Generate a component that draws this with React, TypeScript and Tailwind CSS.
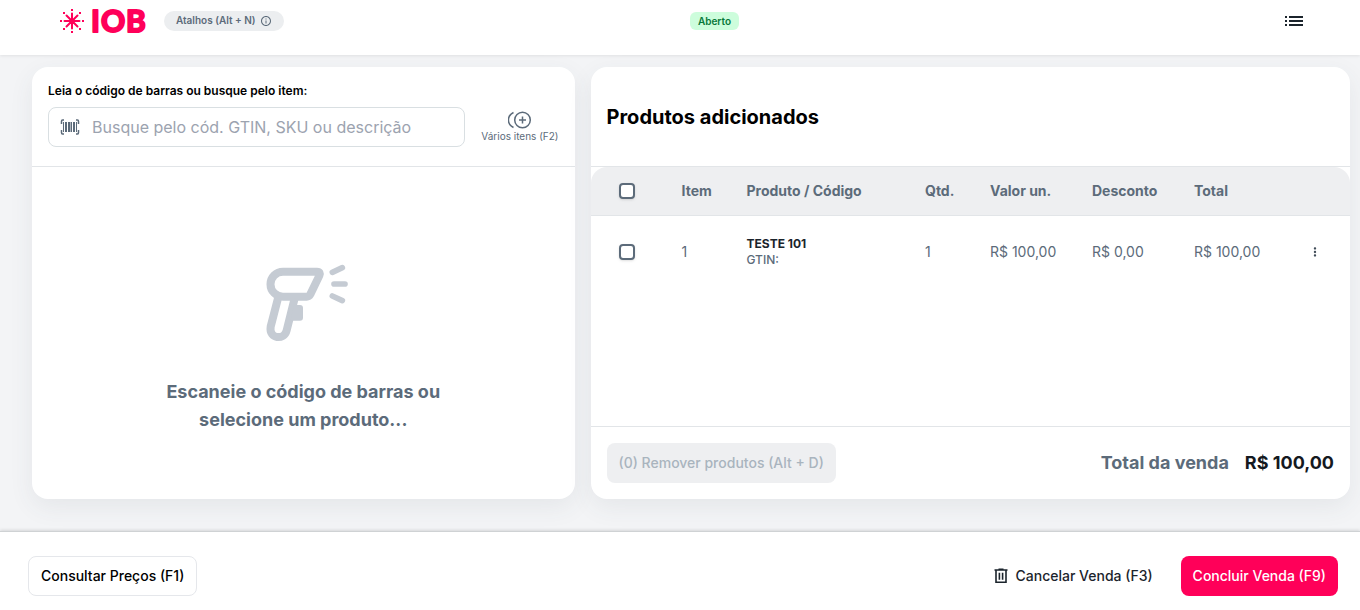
import { type ReactNode } from "react";
import { MdInfoOutline, MdList, MdMoreVert } from "react-icons/md";

interface SaleItem {
  id: number;
  name: string;
  gtin: string;
  quantity: number;
  unitPrice: string;
  discount: string;
  total: string;
}

const items: SaleItem[] = [
  {
    id: 1,
    name: "TESTE 101",
    gtin: "",
    quantity: 1,
    unitPrice: "R$ 100,00",
    discount: "R$ 0,00",
    total: "R$ 100,00",
  },
];

const Logo = () => (
  <svg width="92" height="40" viewBox="0 -7 92 40" role="img" aria-label="IOB">
    <g stroke="#ff0059" strokeWidth="2" strokeLinecap="round">
      <path d="M12 5.5V20.5M4.5 13H19.5M6.5 7.5L17.5 18.5M17.5 7.5L6.5 18.5" />
    </g>
    <g fill="#ff0059">
      <circle cx="12" cy="13" r="2.6" />
      <rect x="11" y="1" width="2" height="2" />
      <rect x="11" y="23" width="2" height="2" />
      <rect x="0" y="12" width="2" height="2" />
      <rect x="22" y="12" width="2" height="2" />
      <rect x="3" y="4" width="2" height="2" />
      <rect x="19" y="4" width="2" height="2" />
      <rect x="3" y="20" width="2" height="2" />
      <rect x="19" y="20" width="2" height="2" />
    </g>
    <text
      x="31 41 66"
      y="24"
      fill="#ff0059"
      stroke="#ff0059"
      strokeWidth="2"
      strokeLinejoin="round"
      className="font-['Lato',sans-serif] text-[30px] font-bold"
    >
      IOB
    </text>
  </svg>
);

const BarcodeIcon = () => (
  <svg width="20" height="16" viewBox="0 0 20 16" fill="none" aria-hidden="true">
    <path
      d="M4 1H2.5Q1.5 1 1.5 2.5V5M1.5 11V13.5Q1.5 15 2.5 15H4M16 1H17.5Q18.5 1 18.5 2.5V5M18.5 11V13.5Q18.5 15 17.5 15H16"
      stroke="#5c6b7a"
      strokeWidth="1.5"
    />
    <path
      d="M3.5 3V13M16.5 3V13M11.5 3V13"
      stroke="#5c6b7a"
      strokeWidth="1"
    />
    <path d="M5 3H7V13H5ZM8 3H10.5V13H8ZM13 3H15V13H13Z" fill="#5c6b7a" />
  </svg>
);

const AddManyIcon = () => (
  <svg
    width="24"
    height="18"
    viewBox="1 0 24 18"
    fill="none"
    stroke="#5c6b7a"
    strokeWidth="1.5"
    aria-hidden="true"
  >
    <circle cx="15.5" cy="9" r="7.8" />
    <path d="M15.5 5.5V12.5M12 9H19M6.5 1.5C-0.3 5 -0.3 13 6.5 16.5" />
  </svg>
);

const ScannerIcon = () => (
  <svg
    className="size-32"
    viewBox="-2 -51 384 384"
    fill="none"
    stroke="#c5cbd3"
    strokeWidth="24"
    aria-hidden="true"
  >
    <path d="M130 65H232Q244 65 239 77L212 133Q208 140 201 140H130A37.5 37.5 0 0 1 130 65Z" />
    <path d="M115 145L93 230C87 268 134 271 141 241L165 145" />
    <path
      d="M164 165H181Q190 165 190 174V203Q190 212 181 212H152Z"
      fill="#c5cbd3"
      stroke="none"
    />
    <path
      d="M278 67L308 53M283 102H316M278 138L308 152"
      strokeWidth="17"
      strokeLinecap="round"
    />
  </svg>
);

const TrashIcon = () => (
  <svg
    width="14"
    height="16"
    viewBox="0 0 14 16"
    fill="none"
    stroke="#1b242c"
    strokeWidth="1.6"
    aria-hidden="true"
  >
    <path d="M0.5 2H13.5M4.5 1.3H9.5M2 2V14.2H12V2M5.4 4.8V11.8M8.6 4.8V11.8" />
  </svg>
);

const Checkbox = ({ label }: { label: string }) => (
  <input
    type="checkbox"
    aria-label={label}
    className="block size-4 appearance-none rounded border-2 border-[#5c6b7a] bg-white shadow-sm checked:bg-[#5c6b7a]"
  />
);

const Card = ({ children }: { children: ReactNode }) => (
  <section className="flex flex-col rounded-2xl bg-white shadow-[0_8px_24px_rgba(60,75,85,0.08)]">
    {children}
  </section>
);

const Header = () => (
  <header className="relative grid min-h-[55px] grid-cols-[10fr_auto_9fr] items-center bg-white pr-[54px] pb-3.5 pl-[60px] shadow-[0_1px_3px_rgba(0,0,0,0.08)]">
    <div className="flex items-center gap-3">
      <Logo />
      <button
        type="button"
        className="flex h-5 items-center gap-1 rounded-full bg-[#eceef0] px-3 text-[10px] font-semibold text-[#5c6b7a]"
      >
        Atalhos (Alt + N)
        <MdInfoOutline size={12} />
      </button>
    </div>
    <span className="rounded-md bg-[#cdfddc] px-2 py-0.5 text-[10px] leading-[14px] font-semibold text-[#08783a]">
      Aberto
    </span>
    <button type="button" aria-label="Menu" className="justify-self-end">
      <MdList size={24} />
    </button>
  </header>
);

const SearchPanel = () => (
  <Card>
    <div className="flex min-h-[100px] items-start gap-4 border-b border-[#e2e5e8] p-4">
      <div className="flex-1">
        <label
          htmlFor="search"
          className="mb-2 block text-xs font-semibold text-black"
        >
          Leia o código de barras ou busque pelo item:
        </label>
        <div className="flex h-10 items-center gap-3 rounded-lg border border-[#d9dfe2] px-[11px]">
          <BarcodeIcon />
          <input
            id="search"
            type="text"
            placeholder="Busque pelo cód. GTIN, SKU ou descrição"
            className="min-w-0 flex-1 text-base outline-none placeholder:text-[#9ca3af]"
          />
        </div>
      </div>
      <button
        type="button"
        className="mt-7 flex flex-col items-center text-[10px] leading-[14px] text-[#5c6b7a]"
      >
        <AddManyIcon />
        Vários itens (F2)
      </button>
    </div>
    <div className="flex flex-1 flex-col items-center justify-center gap-[17px]">
      <ScannerIcon />
      <p className="max-w-[300px] text-center text-lg font-bold text-[#5c6b7a]">
        Escaneie o código de barras ou selecione um produto...
      </p>
    </div>
  </Card>
);

const ProductsTable = () => (
  <table className="w-full table-fixed text-left text-sm text-[#5c6b7a]">
    <colgroup>
      <col className="w-[75px]" />
      <col className="w-[65px]" />
      <col />
      <col className="w-[65px]" />
      <col className="w-[102px]" />
      <col className="w-[102px]" />
      <col className="w-[102px]" />
      <col className="w-[70px]" />
    </colgroup>
    <thead>
      <tr className="h-12">
        <th className="rounded-tl-2xl border-b border-[#e2e5e8] bg-[#eeeff1] pl-7">
          <Checkbox label="Selecionar todos" />
        </th>
        {["Item", "Produto / Código", "Qtd.", "Valor un.", "Desconto", "Total"].map(
          (title) => (
            <th
              key={title}
              className="border-b border-[#e2e5e8] bg-[#eeeff1] pl-4 font-bold whitespace-nowrap"
            >
              {title}
            </th>
          ),
        )}
        <th className="rounded-tr-2xl border-b border-[#e2e5e8] bg-[#eeeff1]" />
      </tr>
    </thead>
    <tbody>
      {items.map((item) => (
        <tr key={item.id} className="h-[73px]">
          <td className="pl-7">
            <Checkbox label={`Selecionar ${item.name}`} />
          </td>
          <td className="pl-4">{item.id}</td>
          <td className="pl-4 text-xs font-medium">
            <div className="font-bold text-[#1b242c]">{item.name}</div>
            <div>GTIN: {item.gtin}</div>
          </td>
          <td className="pl-4">{item.quantity}</td>
          <td className="pl-4 whitespace-nowrap">{item.unitPrice}</td>
          <td className="pl-4 whitespace-nowrap">{item.discount}</td>
          <td className="pl-4 whitespace-nowrap">{item.total}</td>
          <td>
            <button
              type="button"
              aria-label="Opções"
              className="mx-auto block text-[#3f4b57]"
            >
              <MdMoreVert size={14} />
            </button>
          </td>
        </tr>
      ))}
    </tbody>
  </table>
);

const ProductsPanel = () => (
  <Card>
    <div className="flex min-h-[100px] items-center border-b border-[#e2e5e8] px-4">
      <h1 className="text-xl font-bold text-black">Produtos adicionados</h1>
    </div>
    <div className="flex-1">
      <ProductsTable />
    </div>
    <div className="flex items-center justify-between border-t border-[#e2e5e8] p-4">
      <button
        type="button"
        disabled
        className="h-10 rounded-lg bg-[#eeeff1] px-3 text-sm font-medium text-[#a9b4be]"
      >
        (0) Remover produtos (Alt + D)
      </button>
      <div className="flex gap-4 text-lg font-bold">
        <span className="text-[#5c6b7a]">Total da venda</span>
        <span className="text-[#14191f]">R$ 100,00</span>
      </div>
    </div>
  </Card>
);

const Footer = () => (
  <footer className="relative flex items-center justify-between border-t border-[#cfd2d4] bg-white pt-6 pr-[22px] pb-3.5 pl-7 text-sm font-medium shadow-[0_-1px_3px_rgba(0,0,0,0.12)]">
    <button
      type="button"
      className="h-10 rounded-lg border border-[#e5e7eb] px-3 text-black"
    >
      Consultar Preços (F1)
    </button>
    <div className="flex items-center gap-4">
      <button
        type="button"
        className="flex h-10 items-center gap-2 px-3 text-[#1b242c]"
      >
        <TrashIcon />
        Cancelar Venda (F3)
      </button>
      <button
        type="button"
        className="h-10 rounded-lg bg-[#ff0059] px-3 text-white"
      >
        Concluir Venda (F9)
      </button>
    </div>
  </footer>
);

export default function App() {
  return (
    <div className="flex min-h-screen flex-col bg-[#f3f4f6] font-['Inter',sans-serif] text-[#1b242c]">
      <Header />
      <main className="grid flex-1 grid-cols-[5fr_7fr] gap-4 pt-3 pr-2.5 pb-8 pl-8">
        <SearchPanel />
        <ProductsPanel />
      </main>
      <Footer />
    </div>
  );
}
